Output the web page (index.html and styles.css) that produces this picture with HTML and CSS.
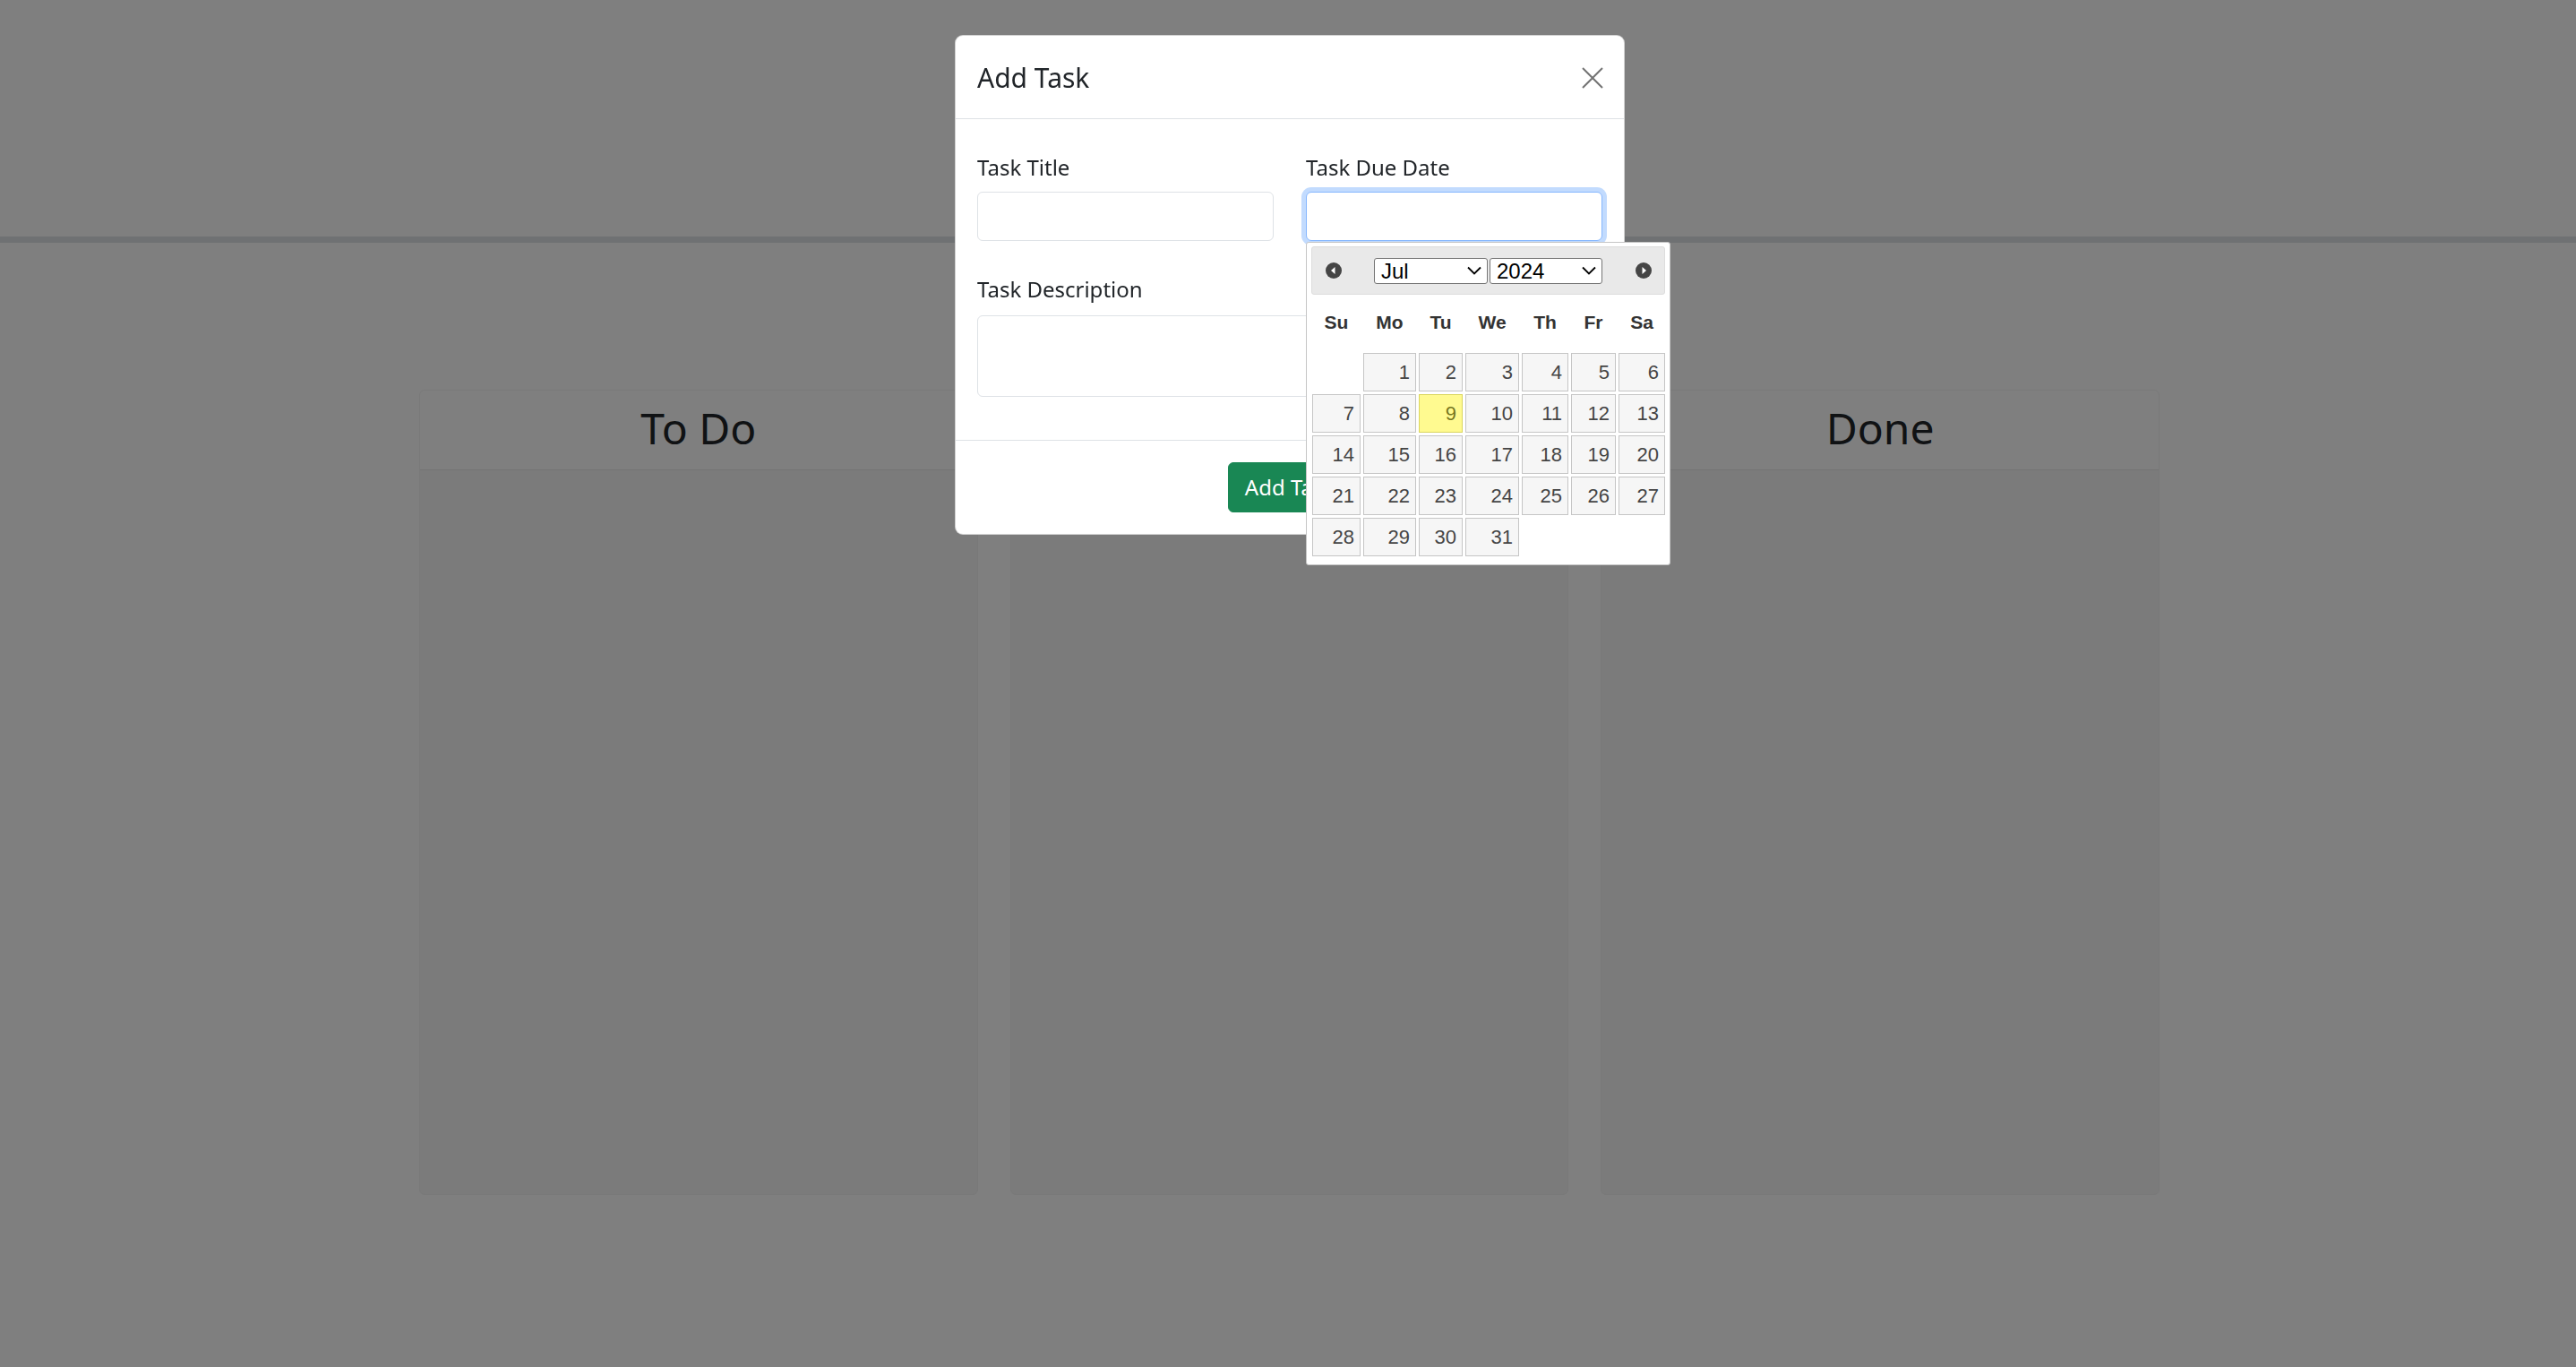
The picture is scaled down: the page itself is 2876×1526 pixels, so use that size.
FILE: index.html
```html
<!DOCTYPE html>
<html lang="en">
<head>
<meta charset="utf-8">
<title>Task Board</title>
<link rel="stylesheet" href="styles.css">
</head>
<body>
<header class="page-header"></header>
<main class="board">
  <div class="board-actions"></div>
  <div class="lanes">
    <section class="lane">
      <div class="lane-header"><h2 class="lane-title">To Do</h2></div>
      <div class="lane-body"></div>
    </section>
    <section class="lane">
      <div class="lane-header"><h2 class="lane-title"></h2></div>
      <div class="lane-body"></div>
    </section>
    <section class="lane">
      <div class="lane-header"><h2 class="lane-title">Done</h2></div>
      <div class="lane-body"></div>
    </section>
  </div>
</main>

<div class="backdrop"></div>

<div class="modal">
  <div class="modal-dialog">
    <div class="modal-header">
      <h5 class="modal-title">Add Task</h5>
      <button class="btn-close" type="button" aria-label="Close">
        <svg width="24" height="24" viewBox="0 0 24 24"><path d="M1 1 L23 23 M23 1 L1 23" stroke="#000" stroke-opacity="0.55" stroke-width="2" fill="none"/></svg>
      </button>
    </div>
    <div class="modal-body">
      <div class="form-row">
        <div class="field">
          <label class="form-label">Task Title</label>
          <input class="form-control" type="text">
        </div>
        <div class="field field-due">
          <label class="form-label">Task Due Date</label>
          <input class="form-control is-focused" type="text">
          <div class="datepicker">
            <div class="dp-header">
              <span class="dp-nav"><svg width="18" height="18" viewBox="0 0 18 18"><circle cx="9" cy="9" r="9" fill="#454545"/><polygon points="6,9 10.5,5 10.5,13" fill="#fff"/></svg></span>
              <div class="dp-select dp-month">Jul<svg width="16" height="10" viewBox="0 0 16 10"><polyline points="1,1.5 8,8.5 15,1.5" fill="none" stroke="#000" stroke-width="1.8"/></svg></div>
              <div class="dp-select dp-year">2024<svg width="16" height="10" viewBox="0 0 16 10"><polyline points="1,1.5 8,8.5 15,1.5" fill="none" stroke="#000" stroke-width="1.8"/></svg></div>
              <span class="dp-nav dp-next"><svg width="18" height="18" viewBox="0 0 18 18"><circle cx="9" cy="9" r="9" fill="#454545"/><polygon points="12,9 7.5,5 7.5,13" fill="#fff"/></svg></span>
            </div>
            <div class="dp-grid">
              <span class="dp-wd">Su</span><span class="dp-wd">Mo</span><span class="dp-wd">Tu</span><span class="dp-wd">We</span><span class="dp-wd">Th</span><span class="dp-wd">Fr</span><span class="dp-wd">Sa</span>
              <span class="dp-empty"></span><span class="dp-day">1</span><span class="dp-day">2</span><span class="dp-day">3</span><span class="dp-day">4</span><span class="dp-day">5</span><span class="dp-day">6</span>
              <span class="dp-day">7</span><span class="dp-day">8</span><span class="dp-day dp-today">9</span><span class="dp-day">10</span><span class="dp-day">11</span><span class="dp-day">12</span><span class="dp-day">13</span>
              <span class="dp-day">14</span><span class="dp-day">15</span><span class="dp-day">16</span><span class="dp-day">17</span><span class="dp-day">18</span><span class="dp-day">19</span><span class="dp-day">20</span>
              <span class="dp-day">21</span><span class="dp-day">22</span><span class="dp-day">23</span><span class="dp-day">24</span><span class="dp-day">25</span><span class="dp-day">26</span><span class="dp-day">27</span>
              <span class="dp-day">28</span><span class="dp-day">29</span><span class="dp-day">30</span><span class="dp-day">31</span><span class="dp-empty"></span><span class="dp-empty"></span><span class="dp-empty"></span>
            </div>
          </div>
        </div>
      </div>
      <div class="field field-desc">
        <label class="form-label">Task Description</label>
        <textarea class="form-control form-textarea"></textarea>
      </div>
    </div>
    <div class="modal-footer">
      <button class="btn btn-success" type="button">Add Task</button>
    </div>
  </div>
</div>
</body>
</html>
```

FILE: styles.css
```css
* { box-sizing: border-box; }

html, body {
  margin: 0;
  padding: 0;
}

body {
  width: 2876px;
  height: 1526px;
  overflow: hidden;
  background: #fff;
  color: #212529;
  font-family: "Noto Sans", "Open Sans", sans-serif;
  font-size: 24px;
  line-height: 1.5;
}

/* ---------- page (under the backdrop) ---------- */
.page-header {
  height: 271px;
  border-bottom: 7px solid #dee2e6;
}

.board {
  padding-left: 3px;
}

.board-actions {
  height: 164px;
}

.lanes {
  width: 1943px;
  height: 899px;
  margin: 0 auto;
  display: grid;
  grid-template-columns: repeat(3, 1fr);
  column-gap: 36px;
}

.lane {
  display: flex;
  flex-direction: column;
  border: 1px solid #f3f3f3;
  border-radius: 6px;
  overflow: hidden;
  background: #f6f6f6;
}

.lane-header {
  background: #fefefe;
  border-bottom: 1px solid #e6e6e6;
  padding: 13px 24px 17px;
  text-align: center;
}

.lane-title {
  margin: 0;
  min-height: 57.6px;
  font-size: 48px;
  font-weight: 400;
  line-height: 57.6px;
}

.lane-body {
  flex: 1;
}

/* ---------- buttons ---------- */
.btn {
  font-family: inherit;
  font-size: 24px;
  line-height: 36px;
  padding: 9px 18px;
  border-radius: 6px;
  border: 1px solid transparent;
  cursor: pointer;
}

.btn-success {
  background: #198754;
  border-color: #198754;
  color: #fff;
}

/* ---------- modal ---------- */
.backdrop {
  position: fixed;
  inset: 0;
  background: rgba(0, 0, 0, 0.5);
  z-index: 10;
}

.modal {
  position: fixed;
  inset: 0;
  z-index: 20;
  padding-left: 4px;
}

.modal-dialog {
  width: 748px;
  margin: 39px auto 0;
  background: #fff;
  border: 1px solid rgba(0, 0, 0, 0.175);
  border-radius: 9px;
}

.modal-header {
  display: flex;
  align-items: center;
  justify-content: space-between;
  padding: 24px 23px 23px 24px;
  border-bottom: 1px solid #dee2e6;
}

.modal-title {
  margin: 0;
  font-size: 30px;
  font-weight: 400;
  line-height: 45px;
}

.btn-close {
  width: 24px;
  height: 24px;
  padding: 0;
  border: 0;
  background: transparent;
  display: flex;
}

.modal-body {
  padding: 24px;
}

.form-row {
  display: grid;
  grid-template-columns: 1fr 1fr;
  column-gap: 36px;
  margin-top: 12px;
  margin-bottom: 36px;
}

.field {
  position: relative;
}

.form-label {
  display: block;
  margin-bottom: 9px;
  line-height: 36px;
}

.field-desc .form-label {
  margin-bottom: 11px;
}

.form-control {
  display: block;
  width: 100%;
  height: 55px;
  margin: 0;
  padding: 9px 18px;
  font-family: inherit;
  font-size: 24px;
  color: #212529;
  background: #fff;
  border: 1px solid #dee2e6;
  border-radius: 6px;
  outline: none;
}

.is-focused {
  border-color: #86b7fe;
  box-shadow: 0 0 0 5px rgba(13, 110, 253, 0.25);
}

.form-textarea {
  height: 91px;
  resize: none;
  margin-bottom: 24px;
}

.modal-footer {
  border-top: 1px solid #dee2e6;
  padding: 18px;
  display: flex;
  justify-content: center;
}

.modal-footer .btn {
  margin: 6px;
}

/* ---------- datepicker ---------- */
.datepicker {
  position: absolute;
  top: 100%;
  left: 0;
  margin-top: 1px;
  z-index: 5;
  width: 407px;
  padding: 4px 5px 9px;
  background: #fff;
  border: 1px solid #c5c5c5;
  border-radius: 3px;
  font-family: "Liberation Sans", Arial, sans-serif;
  color: #333;
}

.dp-header {
  height: 54px;
  display: flex;
  align-items: center;
  padding: 0 14px 0 15px;
  background: #e9e9e9;
  border: 1px solid #ddd;
  border-radius: 3px;
}

.dp-nav {
  width: 18px;
  height: 18px;
  display: flex;
}

.dp-select {
  height: 29px;
  display: flex;
  align-items: center;
  justify-content: space-between;
  padding: 0 6px 0 7px;
  background: #fff;
  border: 1px solid #767676;
  border-radius: 3px;
  color: #000;
  font-size: 24px;
  line-height: 27px;
}

.dp-month {
  width: 127px;
  margin-left: 36px;
}

.dp-year {
  width: 126px;
  margin-left: 2px;
}

.dp-next {
  margin-left: 37px;
}

.dp-grid {
  display: grid;
  grid-template-columns: 54px 59px 49px 60px 52px 50px 52px;
  grid-template-rows: 62px repeat(5, 43px);
  column-gap: 3px;
  row-gap: 3px;
  margin-left: 1px;
}

.dp-wd {
  display: flex;
  align-items: center;
  justify-content: center;
  font-weight: 700;
  font-size: 21px;
  color: #333;
}

.dp-day {
  display: block;
  height: 43px;
  line-height: 41px;
  padding-right: 6px;
  text-align: right;
  font-size: 22px;
  color: #454545;
  background: #f6f6f6;
  border: 1px solid #c5c5c5;
}

.dp-today {
  background: #fffa90;
  border-color: #dad55e;
  color: #777620;
}
```
